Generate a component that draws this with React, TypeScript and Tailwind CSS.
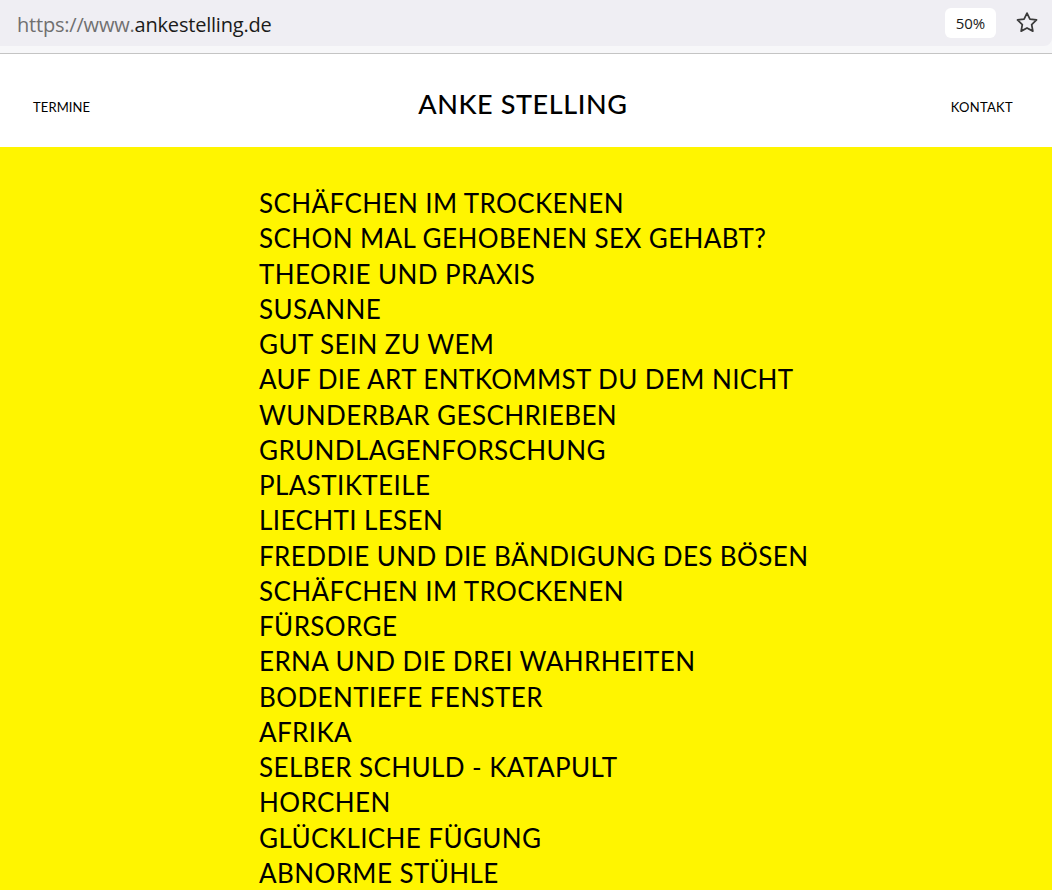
const titles = [
  'SCHÄFCHEN IM TROCKENEN',
  'SCHON MAL GEHOBENEN SEX GEHABT?',
  'THEORIE UND PRAXIS',
  'SUSANNE',
  'GUT SEIN ZU WEM',
  'AUF DIE ART ENTKOMMST DU DEM NICHT',
  'WUNDERBAR GESCHRIEBEN',
  'GRUNDLAGENFORSCHUNG',
  'PLASTIKTEILE',
  'LIECHTI LESEN',
  'FREDDIE UND DIE BÄNDIGUNG DES BÖSEN',
  'SCHÄFCHEN IM TROCKENEN',
  'FÜRSORGE',
  'ERNA UND DIE DREI WAHRHEITEN',
  'BODENTIEFE FENSTER',
  'AFRIKA',
  'SELBER SCHULD - KATAPULT',
  'HORCHEN',
  'GLÜCKLICHE FÜGUNG',
  'ABNORME STÜHLE',
];

export default function App() {
  return (
    <div className="h-[890px] overflow-hidden bg-white">
      {/* Browser bar */}
      <div className="bg-[#f7f7f9]">
        <div className="flex h-[46px] items-center justify-between rounded-br-lg bg-[#efeef3] pl-[17px] pr-[12px]">
          <div className="pt-[3px] text-[20px] font-['Open_Sans',sans-serif] tracking-[-0.2px]">
            <span className="text-[#707070]">https://www.</span>
            <span className="text-[#1b1b1b]">ankestelling.de</span>
          </div>
          <div className="flex items-center gap-[18px]">
            <div className="flex h-[30px] w-[51px] items-center justify-center rounded-md bg-white text-[15px] text-[#1b1b1b] font-['Open_Sans',sans-serif]">
              50%
            </div>
            <svg width="26" height="26" viewBox="0 0 24 24" fill="none" stroke="#3a3a3a" strokeWidth="1.6" strokeLinejoin="round">
              <path d="M12 2.8l2.7 5.6 6.1.8-4.5 4.2 1.1 6.1L12 16.6l-5.4 2.9 1.1-6.1-4.5-4.2 6.1-.8z" />
            </svg>
          </div>
        </div>
        <div className="h-[7px]" />
      </div>
      <div className="h-px bg-[#c4c4c4]" />

      {/* Header */}
      <header className="flex h-[93px] items-center justify-between px-[33px] pt-[25px] pb-[10px] font-['Lato',sans-serif] text-black">
        <a className="text-[13px] tracking-[0.1px]">TERMINE</a>
        <h1 className="-mt-[7px] ml-[5px] text-[27px] font-medium tracking-[0.6px]">ANKE STELLING</h1>
        <a className="pr-[6px] text-[13px] tracking-[0.3px]">KONTAKT</a>
      </header>

      {/* List */}
      <main className="bg-[#fff500] pt-[39px] pb-10 pl-[259px]">
        <ul className="font-['Lato',sans-serif] text-[26px] leading-[35.25px] tracking-[0.4px] text-black whitespace-nowrap">
          {titles.map((title, index) => (
            <li key={index}>{title}</li>
          ))}
        </ul>
      </main>
    </div>
  );
}
